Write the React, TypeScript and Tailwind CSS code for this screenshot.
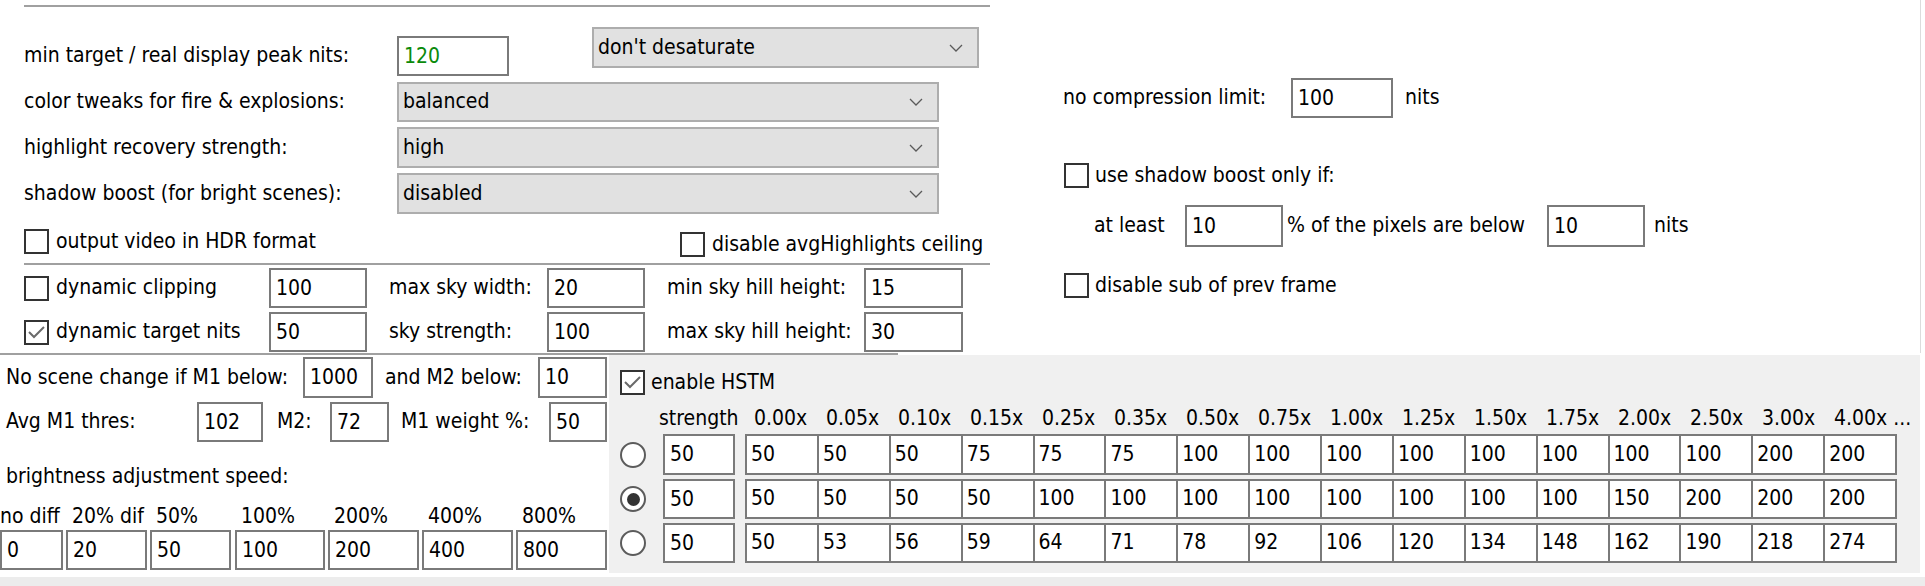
import React from 'react';

const FONT = "font-['DejaVu_Sans_Condensed','DejaVu_Sans',sans-serif]";

function TextBox({ value, w, h = 40, green = false }: { value: string; w: number; h?: number; green?: boolean }) {
  return (
    <div
      className={
        'shrink-0 flex items-center bg-white border-2 border-[#7a7a7a] pl-[5px] leading-none ' +
        (green ? 'text-[#0a8a0a]' : 'text-black')
      }
      style={{ width: w, height: h }}
    >
      {value}
    </div>
  );
}

function Chevron() {
  return (
    <svg width="14" height="8" viewBox="0 0 14 8" className="shrink-0">
      <path d="M1 1 L7 7 L13 1" fill="none" stroke="#5a5a5a" strokeWidth="1.3" />
    </svg>
  );
}

function Select({ value, w, h = 40 }: { value: string; w: number; h?: number }) {
  return (
    <div
      className="shrink-0 flex items-center justify-between bg-[#e1e1e1] border-2 border-[#adadad] pl-[4px] pr-[14px] text-black"
      style={{ width: w, height: h }}
    >
      <span>{value}</span>
      <Chevron />
    </div>
  );
}

function CheckBox({ checked = false }: { checked?: boolean }) {
  return (
    <div className="w-[25px] h-[25px] shrink-0 border-2 border-[#333333] bg-white flex items-center justify-center">
      {checked && (
        <svg width="19" height="15" viewBox="0 0 19 15">
          <path d="M2 7 L7 12 L17 2" fill="none" stroke="#6a6a6a" strokeWidth="2" />
        </svg>
      )}
    </div>
  );
}

function Radio({ selected = false }: { selected?: boolean }) {
  return (
    <div className="w-[26px] h-[26px] shrink-0 rounded-full border-2 border-[#5c5c5c] bg-white flex items-center justify-center">
      {selected && <div className="w-[13px] h-[13px] rounded-full bg-[#333333]" />}
    </div>
  );
}

const speedHeads = ['no diff', '20% dif', '50%', '100%', '200%', '400%', '800%'];
const speedVals = ['0', '20', '50', '100', '200', '400', '800'];
const speedW = [63, 81, 81, 90, 91, 91, 91];
const speedGap = [0, 3, 3, 4, 3, 3, 3];

const hstmHeads = ['0.00x', '0.05x', '0.10x', '0.15x', '0.25x', '0.35x', '0.50x', '0.75x', '1.00x', '1.25x', '1.50x', '1.75x', '2.00x', '2.50x', '3.00x', '4.00x ...'];
const hstmRows = [
  ['50', '50', '50', '75', '75', '75', '100', '100', '100', '100', '100', '100', '100', '100', '200', '200'],
  ['50', '50', '50', '50', '100', '100', '100', '100', '100', '100', '100', '100', '150', '200', '200', '200'],
  ['50', '53', '56', '59', '64', '71', '78', '92', '106', '120', '134', '148', '162', '190', '218', '274'],
];

export default function App() {
  return (
    <div className={`w-[1925px] h-[586px] bg-white text-[21px] text-black overflow-hidden ${FONT}`}>
      {/* upper area */}
      <div className="flex h-[353px]">
        {/* left settings */}
        <div className="w-[990px] shrink-0 flex flex-col">
          <div className="h-[2px] mt-[5px] ml-[24px] bg-[#a0a0a0]" />

          <div className="flex items-start mt-[20px] h-[49px]">
            <div className="w-[397px] pl-[24px] mt-[9px] h-[40px] flex items-center">min target / real display peak nits:</div>
            <div className="mt-[9px]">
              <TextBox value="120" w={112} green />
            </div>
            <div className="ml-[83px]">
              <Select value="don't desaturate" w={387} h={41} />
            </div>
          </div>

          <div className="flex items-center mt-[6px] h-[40px]">
            <div className="w-[397px] pl-[24px]">color tweaks for fire &amp; explosions:</div>
            <Select value="balanced" w={542} />
          </div>
          <div className="flex items-center mt-[5px] h-[41px]">
            <div className="w-[397px] pl-[24px]">highlight recovery strength:</div>
            <Select value="high" w={542} h={41} />
          </div>
          <div className="flex items-center mt-[5px] h-[41px]">
            <div className="w-[397px] pl-[24px]">shadow boost (for bright scenes):</div>
            <Select value="disabled" w={542} h={41} />
          </div>

          <div className="flex mt-[15px] h-[28px] whitespace-nowrap">
            <div className="w-[680px] shrink-0 pl-[24px] flex items-center gap-[7px] self-start h-[25px]">
              <CheckBox />
              <span>output video in HDR format</span>
            </div>
            <div className="flex items-center gap-[7px] self-end h-[25px]">
              <CheckBox />
              <span>disable avgHighlights ceiling</span>
            </div>
          </div>

          <div className="h-[2px] mt-[6px] ml-[24px] bg-[#a0a0a0]" />

          {[
            { chk: false, label: 'dynamic clipping', v1: '100', l2: 'max sky width:', v2: '20', l3: 'min sky hill height:', v3: '15' },
            { chk: true, label: 'dynamic target nits', v1: '50', l2: 'sky strength:', v2: '100', l3: 'max sky hill height:', v3: '30' },
          ].map((r, i) => (
            <div key={i} className={`flex items-center h-[40px] whitespace-nowrap ${i === 0 ? 'mt-[3px]' : 'mt-[4px]'}`}>
              <div className="w-[269px] shrink-0 pl-[24px] flex items-center gap-[7px]">
                <CheckBox checked={r.chk} />
                <span>{r.label}</span>
              </div>
              <TextBox value={r.v1} w={98} />
              <div className="w-[180px] shrink-0 pl-[22px]">{r.l2}</div>
              <TextBox value={r.v2} w={98} />
              <div className="w-[219px] shrink-0 pl-[22px]">{r.l3}</div>
              <TextBox value={r.v3} w={99} />
            </div>
          ))}
        </div>

        {/* right settings */}
        <div className="flex-1 flex flex-col border-r border-[#dcdcdc] mr-[4px] whitespace-nowrap">
          <div className="flex items-center mt-[78px] h-[40px]">
            <div className="w-[301px] shrink-0 pl-[73px]">no compression limit:</div>
            <TextBox value="100" w={102} />
            <span className="ml-[12px]">nits</span>
          </div>
          <div className="flex items-center mt-[45px] h-[25px] pl-[74px] gap-[6px]">
            <CheckBox />
            <span>use shadow boost only if:</span>
          </div>
          <div className="flex items-center mt-[17px] h-[42px]">
            <div className="w-[195px] shrink-0 pl-[104px]">at least</div>
            <TextBox value="10" w={98} h={42} />
            <div className="w-[264px] shrink-0 pl-[4px]">% of the pixels are below</div>
            <TextBox value="10" w={98} h={42} />
            <span className="ml-[9px]">nits</span>
          </div>
          <div className="flex items-center mt-[26px] h-[25px] pl-[74px] gap-[6px]">
            <CheckBox />
            <span>disable sub of prev frame</span>
          </div>
        </div>
      </div>

      <div className="h-[2px] w-[898px] bg-[#a0a0a0]" />

      {/* lower area */}
      <div className="flex h-[222px] whitespace-nowrap">
        {/* scene change / speed */}
        <div className="w-[609px] shrink-0 flex flex-col">
          <div className="flex items-center mt-[2px] h-[41px]">
            <div className="w-[303px] shrink-0 pl-[6px]">No scene change if M1 below:</div>
            <TextBox value="1000" w={70} h={41} />
            <div className="w-[165px] shrink-0 pl-[12px]">and M2 below:</div>
            <TextBox value="10" w={69} h={41} />
          </div>
          <div className="flex items-center mt-[4px] h-[40px]">
            <div className="w-[197px] shrink-0 pl-[6px]">Avg M1 thres:</div>
            <TextBox value="102" w={66} />
            <div className="w-[67px] shrink-0 pl-[14px]">M2:</div>
            <TextBox value="72" w={59} />
            <div className="w-[160px] shrink-0 pl-[12px]">M1 weight %:</div>
            <TextBox value="50" w={58} />
          </div>
          <div className="mt-[20px] h-[30px] pl-[6px] flex items-center">brightness adjustment speed:</div>
          <div className="flex mt-[12px] h-[26px] items-center">
            {speedHeads.map((h, i) => (
              <div
                key={h}
                className={i === 0 ? 'shrink-0' : 'shrink-0 pl-[6px]'}
                style={{ width: speedW[i], marginLeft: speedGap[i] }}
              >
                {h}
              </div>
            ))}
          </div>
          <div className="flex">
            {speedVals.map((v, i) => (
              <div key={i} style={{ marginLeft: speedGap[i] }}>
                <TextBox value={v} w={speedW[i]} />
              </div>
            ))}
          </div>
        </div>

        {/* HSTM panel */}
        <div className="w-[1311px] h-[218px] shrink-0 bg-[#f0f0f0] flex flex-col overflow-hidden">
          <div className="flex items-center gap-[6px] mt-[15px] h-[25px] pl-[11px]">
            <CheckBox checked />
            <span>enable HSTM</span>
          </div>
          <div className="flex items-center mt-[11px] h-[26px] pl-[50px]">
            <div className="w-[86px] shrink-0">strength</div>
            {hstmHeads.map((h) => (
              <div key={h} className="w-[72px] shrink-0 pl-[9px]">
                {h}
              </div>
            ))}
          </div>
          {hstmRows.map((row, ri) => (
            <div key={ri} className={`flex items-center pl-[11px] ${ri === 0 ? 'mt-[2px] h-[41px]' : 'mt-[4px] h-[40px]'}`}>
              <Radio selected={ri === 1} />
              <div className="ml-[17px]">
                <TextBox value="50" w={72} h={ri === 0 ? 41 : 40} />
              </div>
              <div
                className="ml-[10px] flex w-[1152px] shrink-0 border-2 border-[#7a7a7a] bg-white"
                style={{ height: ri === 0 ? 41 : 40 }}
              >
                {row.map((v, ci) => (
                  <div
                    key={ci}
                    className={`flex-1 flex items-center pl-[4px] ${ci === 0 ? '' : 'border-l-2 border-[#7a7a7a]'}`}
                  >
                    {v}
                  </div>
                ))}
              </div>
            </div>
          ))}
        </div>
      </div>
      <div className="h-[9px] bg-[#ececec]" />
    </div>
  );
}
